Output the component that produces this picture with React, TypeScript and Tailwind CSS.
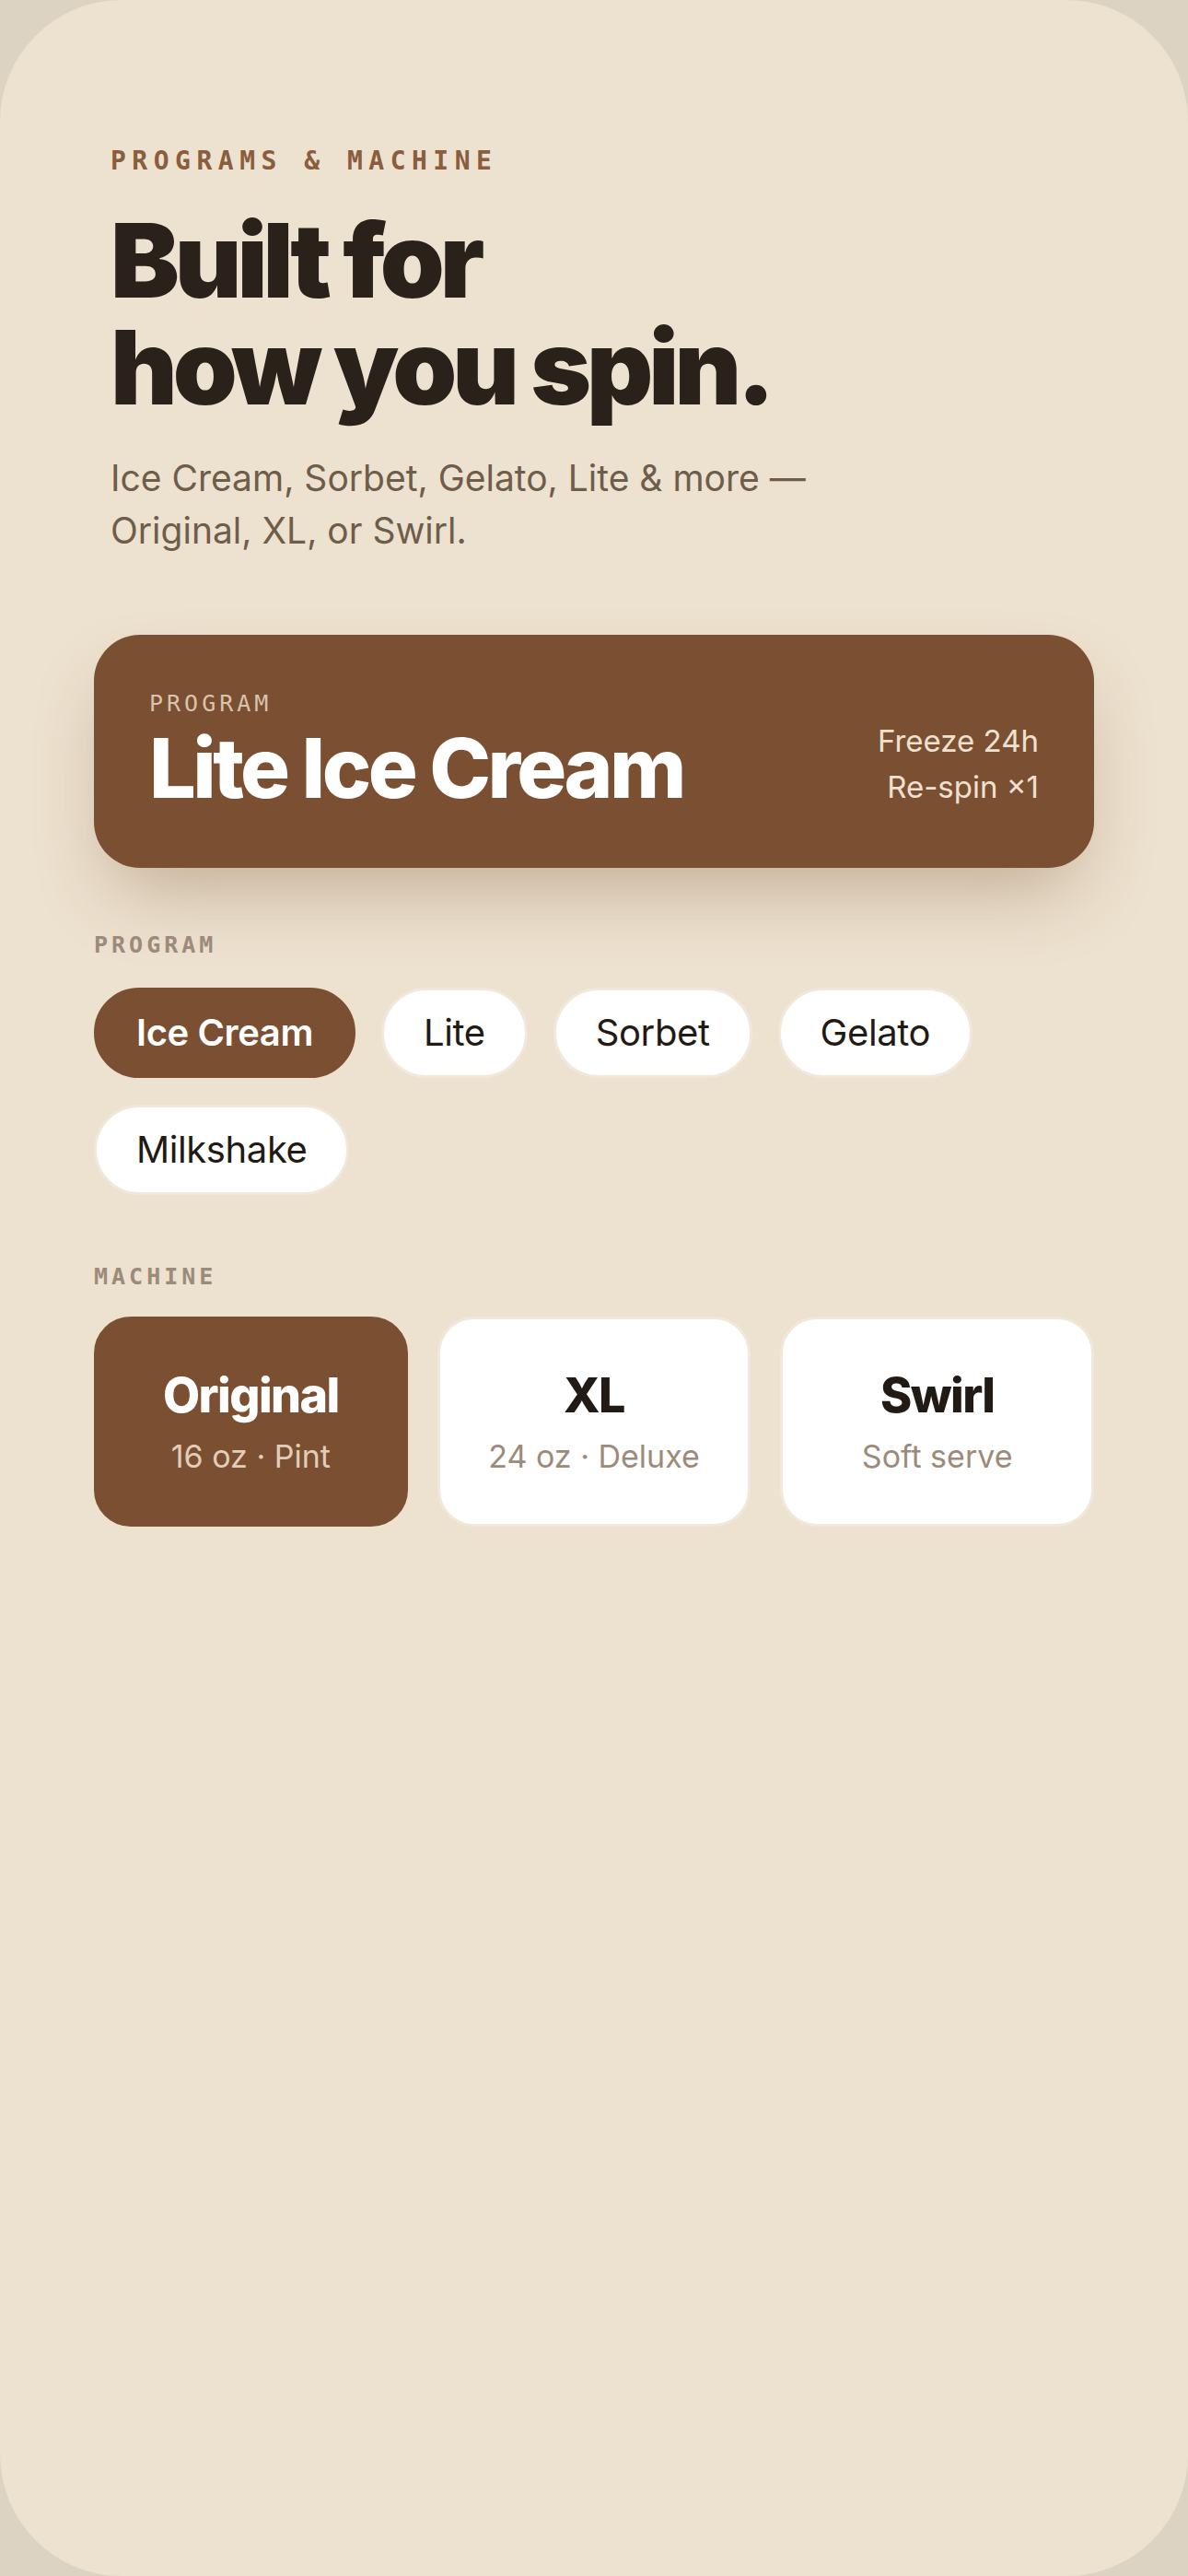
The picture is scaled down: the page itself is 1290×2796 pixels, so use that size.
const PROGRAMS = ["Ice Cream", "Lite", "Sorbet", "Gelato", "Milkshake"];

const MACHINES = [
  { name: "Original", sub: "16 oz · Pint" },
  { name: "XL", sub: "24 oz · Deluxe" },
  { name: "Swirl", sub: "Soft serve" },
];

const sans = { fontFamily: "Inter, 'Noto Sans', sans-serif" };
const mono = { fontFamily: "'DejaVu Sans Mono', 'Liberation Mono', monospace" };

function SectionLabel({ children }: { children: string }) {
  return (
    <div
      className="text-[25px] leading-[30px] font-bold tracking-[4px] text-[#9c8b7a]"
      style={mono}
    >
      {children}
    </div>
  );
}

export default function App() {
  const activeProgram = "Ice Cream";
  const activeMachine = "Original";

  return (
    <div className="min-h-[2796px] w-[1290px] bg-[#ddd3c3]" style={sans}>
      <div className="min-h-[2796px] w-full rounded-[132px] bg-[#ede1cf] px-[102px] pt-[158px]">
        {/* Header */}
        <div className="pl-[18px]">
          <div
            className="text-[28px] leading-[34px] font-bold tracking-[6.5px] text-[#8a5d3d]"
            style={mono}
          >
            PROGRAMS &amp; MACHINE
          </div>
          <h1 className="mt-[32px] text-[112px] leading-[116px] font-black tracking-[-0.045em] text-[#2a211a]">
            <span className="block">Built for</span>
            <span className="block">how you spin.</span>
          </h1>
          <p className="mt-[34px] text-[39px] leading-[57px] text-[#6f5d4b]">
            Ice Cream, Sorbet, Gelato, Lite &amp; more —
            <br />
            Original, XL, or Swirl.
          </p>
        </div>

        {/* Current program card */}
        <div className="mt-[85px] flex items-end justify-between rounded-[50px] bg-[#7b5032] px-[60px] pt-[60px] pb-[63px] shadow-[0_40px_80px_-20px_rgba(110,75,40,0.35)]">
          <div>
            <div
              className="text-[25px] leading-[30px] tracking-[4px] text-[#d8c3ae]"
              style={mono}
            >
              PROGRAM
            </div>
            <div className="mt-[10px] text-[90px] leading-[90px] font-extrabold tracking-[-0.04em] text-white">
              Lite Ice Cream
            </div>
          </div>
          <div className="text-right text-[33px] leading-[50px] text-[#f0e0d0]">
            <div>Freeze 24h</div>
            <div>Re-spin ×1</div>
          </div>
        </div>

        {/* Program chips */}
        <div className="mt-[69px]">
          <SectionLabel>PROGRAM</SectionLabel>
          <div className="mt-[31px] flex flex-wrap gap-x-[28px] gap-y-[29px]">
            {PROGRAMS.map((p) => {
              const on = p === activeProgram;
              return (
                <div
                  key={p}
                  className={
                    on
                      ? "flex h-[98px] items-center rounded-full border-[3px] border-[#7b5032] bg-[#7b5032] px-[43px] text-[40px] font-semibold tracking-[-0.01em] text-white"
                      : "flex h-[98px] items-center rounded-full border-[3px] border-[#f1e8dc] bg-white px-[43px] text-[40px] tracking-[-0.01em] text-[#221a14]"
                  }
                >
                  {p}
                </div>
              );
            })}
          </div>
        </div>

        {/* Machine cards */}
        <div className="mt-[74px]">
          <SectionLabel>MACHINE</SectionLabel>
          <div className="mt-[28px] grid grid-cols-3 gap-[32px]">
            {MACHINES.map((m) => {
              const on = m.name === activeMachine;
              return (
                <div
                  key={m.name}
                  className={
                    on
                      ? "flex h-[228px] flex-col items-center justify-center rounded-[40px] border-[3px] border-[#7b5032] bg-[#7b5032]"
                      : "flex h-[228px] flex-col items-center justify-center rounded-[40px] border-[3px] border-[#f1e8dc] bg-white"
                  }
                >
                  <div
                    className={
                      on
                        ? "text-[52px] leading-[58px] font-extrabold tracking-[-0.03em] text-white"
                        : "text-[52px] leading-[58px] font-extrabold tracking-[-0.03em] text-[#221a14]"
                    }
                  >
                    {m.name}
                  </div>
                  <div
                    className={
                      on
                        ? "mt-[17px] text-[34px] leading-[40px] text-[#e2cdb9]"
                        : "mt-[17px] text-[34px] leading-[40px] text-[#9c8b7a]"
                    }
                  >
                    {m.sub}
                  </div>
                </div>
              );
            })}
          </div>
        </div>
      </div>
    </div>
  );
}
